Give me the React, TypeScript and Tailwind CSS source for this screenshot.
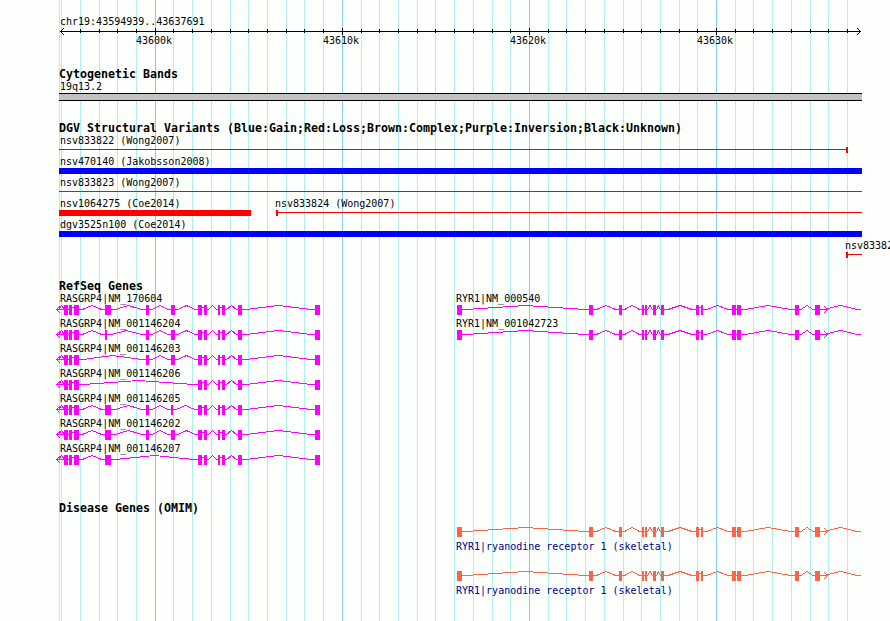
import type { ReactNode } from 'react';

type Exon = [x: number, width: number];

interface Gene {
  name: string;
  exons: Exon[];
}

const MINOR_LINES = [
  59, 61, 80, 99, 117, 136, 173, 192, 211, 230, 248, 267, 286, 304, 323, 361, 379, 398, 417, 435, 454, 473, 492, 510,
  548, 566, 585, 604, 623, 641, 660, 679, 697, 735, 753, 772, 791, 810, 828, 847,
];
const MAJOR_LINES = [155, 342, 529, 716];

const START = 59;
const END = 862;

// Exons shared by every RASGRP4 transcript
const HEAD: Exon[] = [[64, 4], [69, 3], [74, 5]];
const TAIL: Exon[] = [[198, 4], [204, 3], [218, 2], [222, 3], [238, 4], [315, 5]];

const rasgrp4: Gene[] = [
  { name: 'RASGRP4|NM_170604', exons: [...HEAD, [105, 6], [146, 3], [171, 4], ...TAIL] },
  { name: 'RASGRP4|NM_001146204', exons: [...HEAD, [105, 2], [146, 3], [171, 4], ...TAIL] },
  { name: 'RASGRP4|NM_001146203', exons: [...HEAD, [146, 3], [171, 4], ...TAIL] },
  { name: 'RASGRP4|NM_001146206', exons: [...HEAD, ...TAIL] },
  { name: 'RASGRP4|NM_001146205', exons: [...HEAD, [105, 6], [146, 3], [171, 2], ...TAIL] },
  { name: 'RASGRP4|NM_001146202', exons: [...HEAD, [105, 6], [146, 3], [171, 4], ...TAIL] },
  { name: 'RASGRP4|NM_001146207', exons: [...HEAD, [105, 6], ...TAIL] },
];

const RYR1_EXONS: Exon[] = [
  [457, 5], [589, 4], [619, 3], [642, 2], [645, 2], [653, 3], [661, 3], [696, 3], [701, 2],
  [732, 4], [737, 4], [795, 4], [815, 5],
];
const ryr1Names = ['RYR1|NM_000540', 'RYR1|NM_001042723'];

function Grid() {
  return (
    <svg className="absolute inset-0" width="890" height="621" shapeRendering="crispEdges">
      {MINOR_LINES.map((x) => <rect key={x} x={x} y="0" width="1" height="621" fill="#afeeee" />)}
      {MAJOR_LINES.map((x) => <rect key={x} x={x} y="0" width="1" height="621" fill="#87ceeb" />)}
    </svg>
  );
}

function Title({ children }: { children: ReactNode }) {
  return <h2 className="h-[14px] pl-[59px] text-[11.63px] leading-[14px] font-bold">{children}</h2>;
}

function Label({ children }: { children?: ReactNode }) {
  return <div className="h-[12px] pl-[60px]">{children}</div>;
}

function Glyphs({ height, children }: { height: number; children: ReactNode }) {
  return (
    <svg className="block" width="890" height={height} shapeRendering="crispEdges">
      {children}
    </svg>
  );
}

function Ruler() {
  return (
    <Glyphs height={7}>
      <rect x="60" y="3" width="801" height="1" />
      {MINOR_LINES.slice(2).map((x) => <rect key={x} x={x} y="1" width="1" height="4" />)}
      {MAJOR_LINES.map((x) => <rect key={x} x={x} y="0" width="1" height="7" />)}
      <path d="M63.5 0.5 60.5 3.5 63.5 6.5M857.5 0.5 860.5 3.5 857.5 6.5" fill="none" stroke="#000" strokeLinecap="square" />
    </Glyphs>
  );
}

// Short gaps are bridged by a flat line, longer ones by a hat
function intron(from: number, to: number) {
  const gap = to - from;
  if (gap < 2) return `M${from} 4.5H${to}`;
  if (gap < 4) return `M${from} 2.5H${to}`;
  const flat = Math.min(4, gap / 8);
  return `M${from} 4.5H${from + flat}L${(from + to) / 2} 0.5 ${to - flat} 4.5H${to}`;
}

function Transcript({ exons, color }: { exons: Exon[]; color: string }) {
  const path = exons.slice(1).map(([x], i) => intron(exons[i][0] + exons[i][1], x)).join('');
  return (
    <g fill={color} stroke="none">
      <path d={path} fill="none" stroke={color} />
      {exons.map(([x, width]) => <rect key={x} x={x} y="0" width={width} height="10" />)}
    </g>
  );
}

function ReverseGene({ exons }: { exons: Exon[] }) {
  return (
    <>
      <path
        d="M63.5 4.5H56.5M59.5 1.5 56.5 4.5 59.5 7.5M59.5 3.5 60.5 1.5 61.5 0.5 62.5 1.5 63.5 3.5"
        fill="none"
        stroke="#ff00ff"
        strokeLinecap="square"
      />
      <Transcript exons={exons} color="#ff00ff" />
    </>
  );
}

function ForwardGene({ color }: { color: string }) {
  return (
    <>
      <Transcript exons={RYR1_EXONS} color={color} />
      <g fill="none" stroke={color}>
        <path d="M820.5 4.5H827.5M824.5 1.5 827.5 4.5 824.5 7.5" strokeLinecap="square" />
        <path d={intron(820, 861)} />
      </g>
    </>
  );
}

function Variant({ label, children }: { label: ReactNode; children: ReactNode }) {
  return (
    <div className="h-[21px]">
      {label}
      <Glyphs height={6}>{children}</Glyphs>
    </div>
  );
}

const gain = <rect x={START} y="0" width={END - START} height="6" fill="#0000ff" />;

export default function App() {
  return (
    <main className="relative h-[621px] w-[890px] overflow-hidden bg-[#fdfffc] font-['DejaVu_Sans_Mono',monospace] text-[10px] leading-[12px] whitespace-pre text-black">
      <Grid />
      <div className="relative flex flex-col pt-4">
        <section>
          <Label>chr19:43594939..43637691</Label>
          <Ruler />
          <div className="flex h-[12px] pl-[136px]">
            {['43600k', '43610k', '43620k', '43630k'].map((tick) => (
              <span key={tick} className="w-[187px] shrink-0">{tick}</span>
            ))}
          </div>
        </section>

        <section className="mt-5">
          <Title>Cytogenetic Bands</Title>
          <Label>19q13.2</Label>
          <Glyphs height={8}>
            <rect x={START} y="0" width={END - START} height="8" />
            <rect x={START} y="1" width={END - START} height="6" fill="#c5c1c3" />
          </Glyphs>
        </section>

        <section className="mt-5">
          <Title>DGV Structural Variants (Blue:Gain;Red:Loss;Brown:Complex;Purple:Inversion;Black:Unknown)</Title>
          <Variant label={<Label>nsv833822 (Wong2007)</Label>}>
            <path d="M59 2H846V0H848V6H846V3H59Z" fill="#f00" />
          </Variant>
          <Variant label={<Label>nsv470140 (Jakobsson2008)</Label>}>{gain}</Variant>
          <Variant label={<Label>nsv833823 (Wong2007)</Label>}>
            <rect x={START} y="2" width={END - START} height="1" fill="#f00" />
          </Variant>
          <Variant
            label={
              <div className="flex h-[12px] pl-[60px]">
                <span className="w-[215px]">nsv1064275 (Coe2014)</span>
                <span>nsv833824 (Wong2007)</span>
              </div>
            }
          >
            <rect x={START} y="0" width="192" height="6" fill="#f00" />
            <path d="M276 0H278V2H862V3H278V6H276Z" fill="#f00" />
          </Variant>
          <Variant label={<Label>dgv3525n100 (Coe2014)</Label>}>{gain}</Variant>
          <Variant label={<div className="h-[12px] pl-[845px]">nsv83382</div>}>
            <path d="M846 0H848V2H862V3H848V6H846Z" fill="#f00" />
          </Variant>
        </section>

        <section className="mt-[18px]">
          <Title>RefSeq Genes</Title>
          {rasgrp4.map((gene, i) => (
            <div key={gene.name} className="h-[25px]">
              <div className="flex h-[12px] pl-[60px]">
                <span className="w-[396px]">{gene.name}</span>
                <span>{ryr1Names[i]}</span>
              </div>
              <Glyphs height={10}>
                <ReverseGene exons={gene.exons} />
                {ryr1Names[i] && <ForwardGene color="#ff00ff" />}
              </Glyphs>
            </div>
          ))}
        </section>

        <section className="mt-[33px]">
          <Title>Disease Genes (OMIM)</Title>
          {[0, 1].map((row) => (
            <div key={row} className="h-[44px] pt-3">
              <Glyphs height={10}>
                <ForwardGene color="#ff6347" />
              </Glyphs>
              <div className="mt-1 h-[12px] pl-[456px] text-[#00008b]">RYR1|ryanodine receptor 1 (skeletal)</div>
            </div>
          ))}
        </section>
      </div>
    </main>
  );
}
